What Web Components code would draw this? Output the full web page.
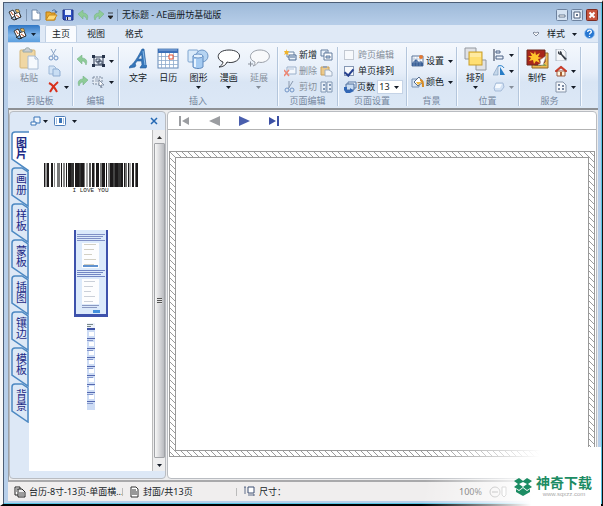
<!DOCTYPE html>
<html lang="zh-CN">
<head>
<meta charset="utf-8">
<title>无标题 - AE画册坊基础版</title>
<style>
html,body{margin:0;height:100%}
body{background:#f8f8f8;font:9px/12px "Noto Sans","Noto Sans CJK SC",sans-serif;color:#141b26}
</style>
</head>
<body>
<app-window>
  <title-bar slot="title"></title-bar>
  <tab-strip slot="tabs"></tab-strip>
  <ribbon-bar slot="ribbon"></ribbon-bar>
  <side-panel slot="side"></side-panel>
  <page-canvas slot="canvas"></page-canvas>
  <status-bar slot="status"></status-bar>
</app-window>
<site-badge></site-badge>
<script>
const define=(name,css,html)=>customElements.define(name,class extends HTMLElement{
  constructor(){
    super();
    const markup=typeof html==='function'?html(this):html;
    this.attachShadow({mode:'open'}).innerHTML=`<style>*{box-sizing:border-box}button,select,a{font:inherit;color:inherit;padding:0;margin:0;border:0;background:none;text-decoration:none}button{display:inline-flex;align-items:center;white-space:nowrap}${css}</style>${markup}`;
  }
});

/* Icon drawings: name -> [width, height, svg content] */
const ICONS={
  app:[14,12,'<path d="M1 3l4-2 3 5-4 3z" fill="#fff" stroke="#333"/><path d="M6 5l5-2 2 5-5 2z" fill="#fff" stroke="#222"/><path d="M7 1l3-1 2 3-3 1z" fill="#e8b860" stroke="#665"/><path d="M3 9l3 2 3-1" stroke="#222" fill="none"/><path d="M3 3l2 3M8 6l3 2" stroke="#c05020"/>'],
  doc:[10,12,'<path d="M1 1h5l3 3v7H1z" fill="#fff" stroke="#6b86a8"/><path d="M6 1v3h3" fill="#dce8f5" stroke="#6b86a8"/>'],
  open:[13,12,'<path d="M1 11V3h4l1 1h4v7z" fill="#e9a92e" stroke="#b97a12"/><path d="M1 11l3-5h8l-3 5z" fill="#ffd976" stroke="#c8891a"/><path d="M7 2c2-2 4-1 4 1m-1-1l1 2 1-2" fill="none" stroke="#456a9c"/>'],
  save:[12,12,'<path d="M1 1h10v10H2l-1-1z" fill="#2c4fc0" stroke="#1d2f83"/><path d="M3 1h6v5H3z" fill="#e8f1ff"/><path d="M4 8h5v3H4z" fill="#d7d9e4"/><path d="M5 8h1v3H5z" fill="#223"/>'],
  undo:[11,11,'<path d="M0 4l5-4v3c4 0 6 3 4 7-1-3-2-4-4-4v3z" fill="#8ecb98" stroke="#6fae7c" stroke-width=".5"/>'],
  redo:[11,11,'<path d="M11 4L6 0v3C2 3 0 6 2 10c1-3 2-4 4-4v3z" fill="#8ecb98" stroke="#6fae7c" stroke-width=".5"/>'],
  arrow:[5,4,'<path d="M0 1h5L2.500 4z" fill="currentColor"/>'],
  more:[5,7,'<path d="M0 1h5M0 4h5L2.500 7z" stroke="#222" fill="#222" stroke-width=".8"/>'],
  paste:[20,24,'<rect x="1" y="3" width="15" height="18" rx="1" fill="#f0d7a4" stroke="#d5b77b"/><path d="M4 5V3h2c0-3 5-3 5 0h2v2z" fill="#c8cdd3" stroke="#9aa"/><path d="M9 9h7l3 3v10H9z" fill="#f6f9fd" stroke="#a9bcd4"/><path d="M16 9v3h3" fill="none" stroke="#a9bcd4"/>'],
  cut:[11,12,'<path d="M3 0l4 7M8 0L4 7" stroke="#8ba4c5" fill="none"/><circle cx="3" cy="9" r="2" fill="none" stroke="#6f92c4"/><circle cx="8" cy="9" r="2" fill="none" stroke="#6f92c4"/>'],
  copy:[13,12,'<path d="M1 1h5l2 2v6H1z" fill="#d3e4f6" stroke="#9db8d8"/><path d="M5 4h5l2 2v5H5z" fill="#c9def4" stroke="#8fadd2"/>'],
  del:[12,12,'<path d="M1 2c4 2 6 5 8 9M10 1C6 4 4 7 2 11" stroke="#d8301c" stroke-width="2" fill="none"/>'],
  group:[13,12,'<path d="M2 2h9v8H2z" fill="none" stroke="#26334a"/><path d="M4 4h4v3H4zM6 6h4v3H6z" fill="#dbe7f5" stroke="#26334a" stroke-width=".8"/><path d="M0 0h3v3H0zM10 0h3v3h-3zM0 9h3v3H0zM10 9h3v3h-3z" fill="#26334a"/>'],
  select:[13,12,'<path d="M1 1h9v7H1z" fill="#e4ebf4" stroke="#7d8ba0" stroke-dasharray="2 1"/><path d="M3 3h5M3 5h5" stroke="#9aa7ba"/><path d="M7 4l5 5-3 0 1 3-1 0-1-3-1 1z" fill="#fff" stroke="#74839a" stroke-width=".8"/>'],
  letter:[18,22,'<path d="M0 20l1-2c3-1 8-9 12-17h2l2 16 1 1-1 2h-6l1-2 1-1-.5-4H8l-2 3 1 1-1 2zM9 11h4l-.5-5z" fill="#3576ba" stroke="#205a9c" stroke-width=".6"/><path d="M14 3l2 14" stroke="#8bbbe8"/>'],
  calendar:[22,22,'<rect x="1" y="1" width="20" height="19" fill="#fff" stroke="#6489b8"/><path d="M1 1h20v4H1z" fill="#3c70b8"/><path d="M2 2h18" stroke="#8fb2e0"/><path d="M1 8.500h20M1 12.500h20M1 16.500h20M4.500 5v15M8.500 5v15M12.500 5v15M16.500 5v15" stroke="#8da9cc" stroke-width=".8"/><path d="M12 7h4v4h-4z" fill="#fff" stroke="#e8502e"/>'],
  shape:[22,22,'<rect x="1" y="2" width="10" height="12" rx="1" fill="#d9eafa" stroke="#7fa4cf"/><circle cx="15" cy="8" r="6" fill="#b6d4f2" stroke="#6f97c6"/><path d="M6 8h10v11c-2 2-8 2-10 0z" fill="#a5cbf2" stroke="#5f89bd"/><ellipse cx="11" cy="8" rx="5" ry="2" fill="#e4f1fd" stroke="#6a93c5"/><path d="M8 11v8" stroke="#e9f4ff" stroke-width="2"/>'],
  bubble:[24,22,'<path d="M2 19c2-1 4-3 4-5C-2 11 0 2 12 2s14 9 5 12c-3 .8-5 .6-7 0-1 3-4 5-8 5z" fill="#fff" stroke="#35383e"/>'],
  bubble2:[24,22,'<path d="M6 18c1-1 2-2 2-4C0 11 3 2 13 2s13 9 4 12c-2 .7-4 .5-6 0-1 2-2 3-5 4z" fill="#f8f9fb" stroke="#9a9fa8"/><path d="M1 16h5M3.500 13.500v5" stroke="#8b929c"/>'],
  newpage:[13,12,'<path d="M3 3h7v5H3z" fill="#fff" stroke="#6c86a6"/><path d="M5 6h7v5H5z" fill="#e9f1fa" stroke="#4b6891"/><path d="M2 0l1 2 2 0-1 2 1 2-3-1-2 1 1-2-1-2h2z" fill="#f1b52c"/><path d="M6 8h5" stroke="#4b6891"/>'],
  delpage:[13,12,'<path d="M3 2h9v7H3z" fill="#f3f7fc" stroke="#9aafca"/><path d="M4 4h6" stroke="#b3c5dc"/><path d="M0 5l5 6M5 5l-5 6" stroke="#ee8774" stroke-width="1.500"/>'],
  cutpage:[13,12,'<path d="M5 0v7M9 0L4 8" stroke="#8a99ae" fill="none"/><circle cx="3" cy="9" r="2" fill="none" stroke="#7295c6"/><circle cx="8" cy="9" r="2" fill="none" stroke="#7295c6"/>'],
  pages:[13,12,'<path d="M1 1h7v6H1z" fill="#eaf2fb" stroke="#627c9f"/><path d="M4 4h8v7H4z" fill="#fff" stroke="#627c9f"/><path d="M6 7h4v2H6zM5 3h2" fill="#bcd0e8" stroke="#627c9f"/>'],
  paste2:[13,12,'<path d="M1 2h8v8H1z" fill="#ecc98a" stroke="#c9a15c"/><path d="M3 1h4v2H3z" fill="#9ba4b2"/><path d="M5 5h4l3 2v4H5z" fill="#f2f6fb" stroke="#a1b0c4"/>'],
  book:[13,12,'<path d="M1 1h5v10H1zM7 1h5v10H7z" fill="#eaf1f9" stroke="#8197b3"/><path d="M3 3h2v2H3zM9 3h2v2H9zM3 7h2v2H3zM9 7h2v2H9z" fill="#8097b6"/>'],
  pageno:[13,12,'<path d="M4 1h8v6H4z" fill="#e8f1fb" stroke="#5c7aa4"/><path d="M2 3h8v6H2z" fill="#c9dcf2" stroke="#4d6d9b"/><path d="M0 6l3 0v3h3V7l4 3-4 2H2L0 9z" fill="#3267b5"/>'],
  bgset:[13,12,'<path d="M1 1h11v10H1z" fill="#fff" stroke="#5b7498"/><path d="M1 11V8l4-4 3 3 2-1 2 2v3z" fill="#395f96"/><path d="M3 1v10M6 1v10M9 1v10M1 4h11M1 7h11" stroke="#91a9c9" stroke-width=".5"/><circle cx="10" cy="2" r="2" fill="#e47831"/>'],
  bgcolor:[13,12,'<path d="M1 3h7v8H1z" fill="#d9e5f3" stroke="#7892b4"/><path d="M3 6l5-5 4 5-5 4z" fill="#fff" stroke="#52698a"/><path d="M5 6h6l-4 3z" fill="#f0b741"/><path d="M9 4c3 0 3 3 3 7" fill="none" stroke="#d78b23" stroke-width="2"/>'],
  arrange:[23,24,'<path d="M1 1h11v11H1zM12 13h10v10H12z" fill="#e0e2e6" stroke="#93989f"/><rect x="5" y="5" width="13" height="13" fill="#ffdf72" stroke="#c79d2b"/><path d="M6 6h11v4H6z" fill="#ffeaa0"/>'],
  align:[12,12,'<path d="M1 0v12" stroke="#26334a"/><path d="M3 2h4v2H3zM3 7h7v3H3z" fill="#eef4fb" stroke="#4c6286"/>'],
  flip:[12,12,'<path d="M5 1v9H0z" fill="#c5d7ea" stroke="#7d9abd" stroke-width=".6"/><path d="M7 2v8h5z" fill="#287dc6"/><path d="M5 1c3-1 5 0 6 2" fill="none" stroke="#2d83ca"/>'],
  rounder:[12,12,'<path d="M3 2h7l1 4-3 4H2L1 7z" fill="#d3e2f4" stroke="#a5bbd8"/><path d="M3 3h6l-2 4H2z" fill="#f5f9fe"/>'],
  make:[23,22,'<path d="M6 5h16v15H6z" fill="#efb94f" stroke="#8e672b"/><path d="M8 18l6-6 7 6z" fill="#8ca14c"/><path d="M1 2h18v12l-4 3H1z" fill="#a7261b" stroke="#6d291d"/><path d="M9 3l1 4 4-2-2 4 4 1-4 1 2 4-4-2-2 3-1-4-4 1 2-3-3-2 4 0-2-4 4 2z" fill="#ffc62c"/><path d="M20 8l-3 9h-5c3-1 3-3 2-5z" fill="#fff" stroke="#aaa" stroke-width=".6"/>'],
  wrench:[12,12,'<path d="M1 0h7l3 3v9H1z" fill="#f5f7fa" stroke="#9ba6b4" stroke-width=".8"/><path d="M4 2c-2 1-1 4 2 4l4 5 2-1-5-5c0-2-1-3-2-3v3z" fill="#343a43"/>'],
  home:[12,12,'<path d="M2 6h8v5H2z" fill="#fff6df" stroke="#9c5940"/><path d="M0 6l6-5 6 5-1 1-5-4-5 4z" fill="#dc3922" stroke="#a62716" stroke-width=".6"/><path d="M5 7h2v4H5z" fill="#a95f32"/>'],
  template:[12,12,'<path d="M1 1h7l3 3v7H1z" fill="#f4f7fb" stroke="#8795a9"/><path d="M3 3h2v2H3zM7 4h2v2H7zM3 7h2v2H3zM7 7h2v2H7z" fill="#7888a1"/>'],
  help:[11,11,'<circle cx="5.500" cy="5.500" r="5" fill="#2777d2" stroke="#a8cdf2"/><path d="M3.700 4c0-3 4-2 3.600 0-.2 1-1.800 1-1.800 2.500M5.500 8v1" fill="none" stroke="#fff" stroke-width="1.300"/>'],
  heart:[8,6,'<path d="M1 2l1-1 2 1 2-1 1 1-3 3z" fill="#fff" stroke="#68758a" stroke-width=".8"/>'],
  min:[12,12,'<rect x=".5" y=".5" width="11" height="11" rx="1" fill="#d5e3f2" stroke="#6d829f"/><path d="M3 6h6v2H3z" fill="#fff" stroke="#4c5f7a" stroke-width=".8"/>'],
  max:[12,12,'<rect x=".5" y=".5" width="11" height="11" rx="1" fill="#d5e3f2" stroke="#6d829f"/><path d="M3 3h6v6H3z" fill="#fff" stroke="#4c5f7a"/><path d="M5 5h2v2H5z" fill="#62758f"/>'],
  close:[12,12,'<rect x=".5" y=".5" width="11" height="11" rx="1" fill="#c7543d" stroke="#7c2b22"/><path d="M3.500 3.500l5 5M8.500 3.500l-5 5" stroke="#fff" stroke-width="2"/>'],
  windows:[11,11,'<path d="M4 1h6v6H4z" fill="#eef5fd" stroke="#3974b8"/><path d="M1 6h5v3H1z" fill="#fff" stroke="#3974b8"/>'],
  view:[12,10,'<rect x=".5" y=".5" width="11" height="9" rx="1" fill="#fff" stroke="#4d7db8"/><path d="M2 2h1v6H2zM9 2h1v6H9z" fill="#a5c1e0"/><path d="M5 2h3v5H5z" fill="#3974b8"/>'],
  x:[8,8,'<path d="M1 1l6 6M7 1L1 7" stroke="#2368b4" stroke-width="1.500"/>'],
  first:[11,10,'<path d="M0 0h2v10H0zM10 1v8L3 5z" fill="#9b9da1"/>'],
  prev:[11,10,'<path d="M11 0v10L0 5z" fill="#9b9da1"/>'],
  next:[11,10,'<path d="M0 0v10l11-5z" fill="#4a5fae"/>'],
  last:[11,10,'<path d="M0 1v8l7-4zM8 0h2v10H8z" fill="#3c50a4"/>'],
  stack:[12,12,'<path d="M1 1h5v8H1z" fill="#fff" stroke="#222"/><path d="M4 3h4l3 3v5H4z" fill="#eee" stroke="#222"/><path d="M5 7h5M5 9h5M2 3h2M2 5h1" stroke="#222" stroke-width=".8"/>'],
  sheet:[9,12,'<path d="M1 1h5l2 2v8H1z" fill="#fff" stroke="#333"/><path d="M2 4h4M2 6h5M2 8h5" stroke="#333"/>'],
  size:[11,11,'<path d="M4 1h6v6H4z" fill="#fff" stroke="#3d4f72"/><path d="M1 1v7M0 1h2M4 9h6M10 8v2" stroke="#3d4f72" stroke-width=".8"/>'],
  minus:[12,12,'<circle cx="6" cy="6" r="5" fill="none" stroke="#888"/><path d="M3 6h6" stroke="#777"/>'],
  knob:[6,12,'<path d="M1 1h4v8L3 11 1 9z" fill="#fff" stroke="#888"/>'],
  up:[5,4,'<path d="M0 4h5L2.500 1z" fill="#333"/>'],
  badge:[18,18,'<path d="M5 0l4 3 4-3 5 3-4 3 4 3-5 3-4-3-4 3-5-3 4-3-4-3z" fill="#1c8c63"/><path d="M9 4l4 2-4 3-4-3z" fill="#fff"/><path d="M2 11l3 2 4-3 4 3 3-2v3l-7 4-7-4z" fill="#1c8c63"/>']
};
define('ui-icon',':host{display:inline-flex;flex:none}svg{display:block}',el=>{
  const [w,h,d]=ICONS[el.getAttribute('name')];
  return `<svg width="${w}" height="${h}" viewBox="0 0 ${w} ${h}" aria-hidden="true">${d}</svg>`;
});

define('app-window',`
:host{display:grid;grid-template-rows:22px 17px 66px minmax(0,1fr) 19px;min-height:100vh;box-sizing:border-box;border:solid;border-width:2px 1px 2px 3px;border-color:#f8f8f8 #111 #000 #f8f8f8;
 background:linear-gradient(#9db9d8,#b6cde8 22px,#b7cfea 100%);padding:1px 4px 3px 5px;box-shadow:inset 1px 1px #4c5e76,inset -1px -1px #58c4e4}
.tabs{background:#dfe9f6}
.work{display:grid;grid-template-columns:157px minmax(0,1fr);gap:1px;background:#ededee;border-top:2px solid #8d9094;border-left:1px solid #9aa0a8;border-bottom:2px solid #a9a9ab;padding:1px 1px 1px 0;min-height:0}
.work ::slotted(*){min-height:0}`,
`<slot name="title"></slot><div class="tabs"><slot name="tabs"></slot></div><slot name="ribbon"></slot>
<main class="work"><slot name="side"></slot><slot name="canvas"></slot></main><slot name="status"></slot>`);

define('title-bar',`
:host{display:flex;align-items:center;gap:4px;padding:2px 0 0}
button{justify-content:center}
.sep{width:1px;height:12px;background:#7e95b2}
h1{font:inherit;margin:0;flex:1;white-space:nowrap}
.tools{display:flex;align-items:center;gap:4px}
.win{display:flex;gap:3px}`,
`<ui-icon name="app"></ui-icon><span class="sep"></span>
<div class="tools"><button aria-label="新建"><ui-icon name="doc"></ui-icon></button><button aria-label="打开"><ui-icon name="open"></ui-icon></button>
<button aria-label="保存"><ui-icon name="save"></ui-icon></button><button aria-label="撤销"><ui-icon name="undo"></ui-icon></button>
<button aria-label="重做"><ui-icon name="redo"></ui-icon></button><button aria-label="更多"><ui-icon name="more"></ui-icon></button></div>
<span class="sep"></span><h1>无标题 - AE画册坊基础版</h1>
<div class="win"><button aria-label="最小化"><ui-icon name="min"></ui-icon></button><button aria-label="最大化"><ui-icon name="max"></ui-icon></button><button aria-label="关闭"><ui-icon name="close"></ui-icon></button></div>`);

define('tab-strip',`
:host{display:flex;height:17px}
.menu{width:32px;justify-content:center;gap:4px;background:linear-gradient(#2f76c4,#82b7ea 60%,#5c9fdf);border-radius:2px 2px 0 0;color:#123}
nav{display:flex;flex:1;padding-left:5px}
nav button{width:38px;justify-content:center}
nav button.on{width:32px;background:#f9fbfe;border:1px solid #c0cfe2;border-bottom:0;border-radius:2px 2px 0 0}
.right{display:flex;align-items:center;gap:7px;padding-right:3px}
.style{gap:7px}`,
`<button class="menu" aria-label="菜单"><ui-icon name="app"></ui-icon><ui-icon name="arrow"></ui-icon></button>
<nav><button class="on">主页</button><button>视图</button><button>格式</button></nav>
<div class="right"><ui-icon name="heart"></ui-icon><button class="style">样式<ui-icon name="arrow"></ui-icon></button><button aria-label="帮助"><ui-icon name="help"></ui-icon></button></div>`);

define('ribbon-group',`
:host{display:flex;flex-direction:column;box-sizing:border-box;border-right:1px solid #b4c6dc;box-shadow:1px 0 #f6faff;margin:4px 0 3px}
.body{flex:1;display:flex;min-height:0}
footer{color:#75869d;text-align:center;line-height:11px}`,
el=>`<div class="body"><slot></slot></div><footer>${el.getAttribute('label')}</footer>`);

define('ribbon-big',`
:host{display:block}
:host([off]){color:#858e9a}
button{flex-direction:column;width:100%}
.pic{height:24px;display:flex;align-items:center}
.txt{line-height:13px}
.arr{height:6px;display:flex;align-items:center}`,
el=>`<button><span class="pic"><ui-icon name="${el.getAttribute('icon')}"></ui-icon></span><span class="txt">${el.getAttribute('label')}</span>${el.hasAttribute('drop')?'<span class="arr"><ui-icon name="arrow"></ui-icon></span>':''}</button>`);

define('ribbon-small',`
:host{display:flex;align-items:center}
:host([off]){color:#858e9a}
button{gap:2px}
.arr{padding-left:2px;display:flex}`,
el=>`<button ${el.hasAttribute('label')?'':`aria-label="${el.getAttribute('icon')}"`}><ui-icon name="${el.getAttribute('icon')}"></ui-icon>${el.hasAttribute('label')?`<span>${el.getAttribute('label')}</span>`:''}${el.hasAttribute('drop')?'<span class="arr"><ui-icon name="arrow"></ui-icon></span>':''}</button>`);

define('ribbon-bar',`
:host{display:grid;grid-template-columns:65px 46px 159px 60px 69px 50px 62px 62px 1fr;background:linear-gradient(#f4f8fd,#e6eef9 45%,#d9e5f4 60%,#dce8f6);border-top:1px solid #c8d7ea}
.col{display:grid;grid-auto-rows:16px;align-content:start;justify-items:start}
.two{grid-auto-rows:21px;padding:3px 0 0 4px}
.paste{width:40px;padding-left:2px}
.five{display:grid;grid-template-columns:repeat(5,1fr);flex:1;padding:0 3px 0 4px}
.pe{display:grid;grid-template-columns:36px 13px;grid-auto-rows:16px;padding-left:6px;align-content:start}
.ps{padding-left:6px}
label{display:flex;align-items:center;gap:4px;height:16px;white-space:nowrap}
label.off{color:#858e9a}
label.n{gap:0}
input{appearance:none;margin:0;width:10px;height:10px;border:1px solid #8597b4;background:#f7f9fc;display:grid;place-items:center}
input:checked::after{content:"";width:4px;height:7px;border:solid #26408f;border-width:0 2px 2px 0;transform:rotate(40deg)}
.off input{border-color:#c3c9d2}
.pick{display:grid;align-items:center;width:26px;height:14px;background:#fff;border:1px solid #c5d3e6}
.pick select{grid-area:1/1;appearance:none;width:100%;padding-left:1px;outline:0;line-height:12px}
.pick ui-icon{grid-area:1/1;justify-self:end;margin-right:3px;pointer-events:none}
.big{width:36px}`,
`<ribbon-group label="剪贴板"><ribbon-big class="paste" icon="paste" label="粘贴" off></ribbon-big><div class="col"><ribbon-small icon="cut"></ribbon-small><ribbon-small icon="copy"></ribbon-small><ribbon-small icon="del" drop></ribbon-small></div></ribbon-group>
<ribbon-group label="编辑"><div class="col two"><ribbon-small icon="undo"></ribbon-small><ribbon-small icon="redo"></ribbon-small></div><div class="col two"><ribbon-small icon="group" drop></ribbon-small><ribbon-small icon="select" drop></ribbon-small></div></ribbon-group>
<ribbon-group label="插入"><div class="five"><ribbon-big icon="letter" label="文字"></ribbon-big><ribbon-big icon="calendar" label="日历"></ribbon-big><ribbon-big icon="shape" label="图形" drop></ribbon-big><ribbon-big icon="bubble" label="漫画" drop></ribbon-big><ribbon-big icon="bubble2" label="延展" drop off></ribbon-big></div></ribbon-group>
<ribbon-group label="页面编辑"><div class="pe"><ribbon-small icon="newpage" label="新增"></ribbon-small><ribbon-small icon="pages"></ribbon-small><ribbon-small icon="delpage" label="删除" off></ribbon-small><ribbon-small icon="paste2"></ribbon-small><ribbon-small icon="cutpage" label="剪切" off></ribbon-small><ribbon-small icon="book"></ribbon-small></div></ribbon-group>
<ribbon-group label="页面设置"><div class="ps"><label class="off"><input type="checkbox" disabled>跨页编辑</label><label><input type="checkbox" checked>单页排列</label><label class="n"><ui-icon name="pageno"></ui-icon>页数&nbsp;<span class="pick"><select><option>13</option></select><ui-icon name="arrow"></ui-icon></span></label></div></ribbon-group>
<ribbon-group label="背景"><div class="col two"><ribbon-small icon="bgset" label="设置" drop></ribbon-small><ribbon-small icon="bgcolor" label="颜色" drop></ribbon-small></div></ribbon-group>
<ribbon-group label="位置"><ribbon-big class="big" icon="arrange" label="排列" drop></ribbon-big><div class="col"><ribbon-small icon="align" drop></ribbon-small><ribbon-small icon="flip" drop></ribbon-small><ribbon-small icon="rounder" drop off></ribbon-small></div></ribbon-group>
<ribbon-group label="服务"><ribbon-big class="big" icon="make" label="制作"></ribbon-big><div class="col"><ribbon-small icon="wrench"></ribbon-small><ribbon-small icon="home" drop></ribbon-small><ribbon-small icon="template" drop></ribbon-small></div></ribbon-group>`);

define('side-tab',`
:host{display:grid;width:18px;height:40px;margin-bottom:-4px}
svg{grid-area:1/1}
path{fill:#dce8f6;stroke:#4c88c2;stroke-width:1.500}
:host([on]) path{fill:#fff}
button{grid-area:1/1;z-index:1;writing-mode:vertical-rl;text-orientation:upright;font-size:11px;line-height:12px;color:#1c2a86;justify-content:flex-start;padding:6px 2px 0 3px;align-items:center}
:host([on]) button{font-weight:bold}`,
el=>`<svg width="18" height="40" viewBox="0 0 18 40">${el.hasAttribute('on')?'<path d="M18 1H4Q1 1 1 4V28L18 40"/>':'<path d="M17 39V5L11 1H4Q1 1 1 4V28Z"/>'}</svg><button>${el.getAttribute('label')}</button>`);

/* Barcode bars: x, width, shade */
const BARS=[[0,1],[1,2,'#999'],[3,2],[7,2],[10,1,'#888'],[13,3,'#777'],[17,1],[19,2,'#888'],[22,1],[24,3],[27,3,'#333'],[31,4],[35,2,'#333'],[37,3],[40,1,'#777'],[42,2,'#aaa'],[45,2,'#555'],[48,2],[50,1,'#888'],[52,3],[56,2,'#777'],[58,3],[62,1],[64,2,'#888'],[66,3],[69,2,'#444'],[71,3],[74,3,'#333'],[77,2],[80,1],[81,2,'#777'],[84,1],[85,2,'#aaa'],[88,2],[91,1,'#666'],[92,2]];
const bars=BARS.map(([x,w,c])=>`<rect x="${x}" width="${w}" height="24" fill="${c||'#1c1a1b'}"/>`).join('');
const lines=(x,y,w,n,s,c)=>Array.from({length:n},(_,i)=>`<rect x="${x}" y="${y+i*s}" width="${w-(i%3)*2}" height="1" fill="${c}"/>`).join('');
const form=`<rect width="34" height="87" fill="#3e52ac"/><rect x="2" width="30" height="84" fill="#dceafb"/>${lines(3,4,28,4,2,'#8090c6')}<rect x="8" y="13" width="17" height="25" fill="#fdfdfe"/>${lines(10,14,12,5,5,'#d3d0c4')}<rect x="9" y="35" width="15" height="2" fill="#5f91cf"/>${lines(3,40,28,4,2,'#7286c4')}<rect x="8" y="49" width="17" height="25" fill="#fdfdfe"/>${lines(10,51,11,5,5,'#cbd0d9')}${lines(8,75,17,2,2,'#8a98c2')}<rect x="19" y="80" width="7" height="3" fill="#4590dc"/>`;
const strip=`<rect width="8" height="87" fill="#cddcf5"/><rect width="8" height="5" fill="#eef2fa"/>${lines(0,1,6,3,2,'#788')}<rect y="5" width="8" height="2" fill="#3e52a6"/>${[15,25,34,43,52,61,69,78].map(y=>`<rect x="2" y="${y-6}" width="5" height="4" fill="#fff"/><rect y="${y}" width="8" height="1" fill="#5569b0"/><rect y="${y+2}" width="6" height="1" fill="#8396cc"/>`).join('')}`;

define('side-panel',`
:host{display:grid;grid-template-rows:18px minmax(0,1fr) 7px;grid-template-columns:19px minmax(0,1fr) 13px;background:#dde8f6;border:1px solid #b9bcc1;border-radius:4px;box-sizing:border-box}
header{grid-column:1/-1;display:flex;align-items:center;gap:2px;padding:0 7px 0 20px}
header .v{margin-left:4px}
header .c{margin-left:auto}
header button{gap:2px}
.tabs{padding:1px 0 0 1px}
.list{background:#fff;display:flex;flex-direction:column;align-items:center;padding-top:33px;min-height:0;overflow:hidden}
.list figure{margin:0;text-align:center}
svg{display:block}
figcaption{font:6px/8px "Liberation Mono",monospace;color:#222}
.f{padding-top:35px}.s{padding-top:6px}
.bar{display:flex;flex-direction:column;background:#eeeeef;border-left:1px solid #bbb;align-items:center}
.bar button{height:13px;width:100%;justify-content:center}
.thumb{flex:1;align-self:stretch;display:flex;align-items:center;justify-content:center;background:linear-gradient(90deg,#f7f7f7,#d2d3d6 60%,#b9bbc0);border:1px solid #a2a4a8;border-radius:1px;margin-left:1px}
.grip{width:5px;height:6px;background:repeating-linear-gradient(#555 0 1px,#e5e5e5 1px 2px)}`,
`<header><button aria-label="窗口"><ui-icon name="windows"></ui-icon><ui-icon name="arrow"></ui-icon></button><button class="v" aria-label="视图"><ui-icon name="view"></ui-icon>&nbsp;<ui-icon name="arrow"></ui-icon></button><button class="c" aria-label="关闭"><ui-icon name="x"></ui-icon></button></header>
<div class="tabs">${['图片','画册','样板','蒙板','插图','镶边','模板','背景'].map((t,i)=>`<side-tab label="${t}"${i?'':' on'}></side-tab>`).join('')}</div>
<div class="list"><figure><svg width="94" height="24">${bars}</svg><figcaption>I LOVE YOU</figcaption></figure><figure class="f"><svg width="34" height="87">${form}</svg></figure><figure class="s"><svg width="8" height="87">${strip}</svg></figure></div>
<div class="bar"><button aria-label="向上"><ui-icon name="up"></ui-icon></button><div class="thumb"><span class="grip"></span></div><button aria-label="向下"><ui-icon name="arrow"></ui-icon></button></div>`);

const HATCH=`url("data:image/svg+xml,%3Csvg xmlns='http://www.w3.org/2000/svg' width='6' height='6'%3E%3Cpath d='M-1 -1L7 7M5 -1L7 1M-1 5L1 7' stroke='%23909090' stroke-width='.9'/%3E%3C/svg%3E")`;
define('page-canvas',`
:host{display:grid;grid-template-rows:18px minmax(0,1fr);background:#fff;border:1px solid #b9bcc1;border-radius:4px;box-sizing:border-box;overflow:hidden}
nav{display:flex;align-items:center;padding-left:11px;gap:19px;border-bottom:1px solid #b3b3b3}
.area{padding:21px 1px;display:grid}
.frame{border:1px solid #999;padding:5px;background:${HATCH};display:grid}
.page{background:#fff;border:1px solid #999}`,
`<nav><button aria-label="首页"><ui-icon name="first"></ui-icon></button><button aria-label="上一页"><ui-icon name="prev"></ui-icon></button><button aria-label="下一页"><ui-icon name="next"></ui-icon></button><button aria-label="末页"><ui-icon name="last"></ui-icon></button></nav>
<div class="area"><div class="frame"><div class="page"></div></div></div>`);

define('status-bar',`
:host{display:grid;grid-template-columns:114px 114px 1fr auto;align-items:center;background:#f0eeee;white-space:nowrap}
span{display:flex;align-items:center;gap:4px;padding-left:7px}
.a{gap:3px;padding-left:6px}
.b{border-left:1px solid #bbb;line-height:10px;height:8px}
.z{padding-right:91px;gap:7px;color:#444}
.z ui-icon+ui-icon{margin-left:-7px}`,
`<span class="a"><ui-icon name="stack"></ui-icon>台历-8寸-13页-单面横...</span><span class="b"><ui-icon name="sheet"></ui-icon>封面/共13页</span><span class="b"><ui-icon name="size"></ui-icon>尺寸：</span><span class="z">100%<ui-icon name="minus"></ui-icon><ui-icon name="knob"></ui-icon></span>`);

define('site-badge',`
:host{position:absolute;right:2px;bottom:0;width:190px;height:59px;box-sizing:border-box;display:flex;align-items:center;justify-content:flex-end;gap:4px;padding:20px 9px 0 0;background:linear-gradient(100deg,rgba(255,255,255,0) 10%,rgba(255,255,255,.6) 45%,#fff 65%)}
b{display:block;font:bold 14px/16px "Liberation Sans","Noto Sans CJK SC",sans-serif;color:#1c8c63}
small{display:block;font:6px/7px "Liberation Sans",sans-serif;color:#aaa;text-align:center}`,
`<ui-icon name="badge"></ui-icon><div><b>神奇下载</b><small>www.sqxzz.com</small></div>`);
</script>
</body>
</html>
